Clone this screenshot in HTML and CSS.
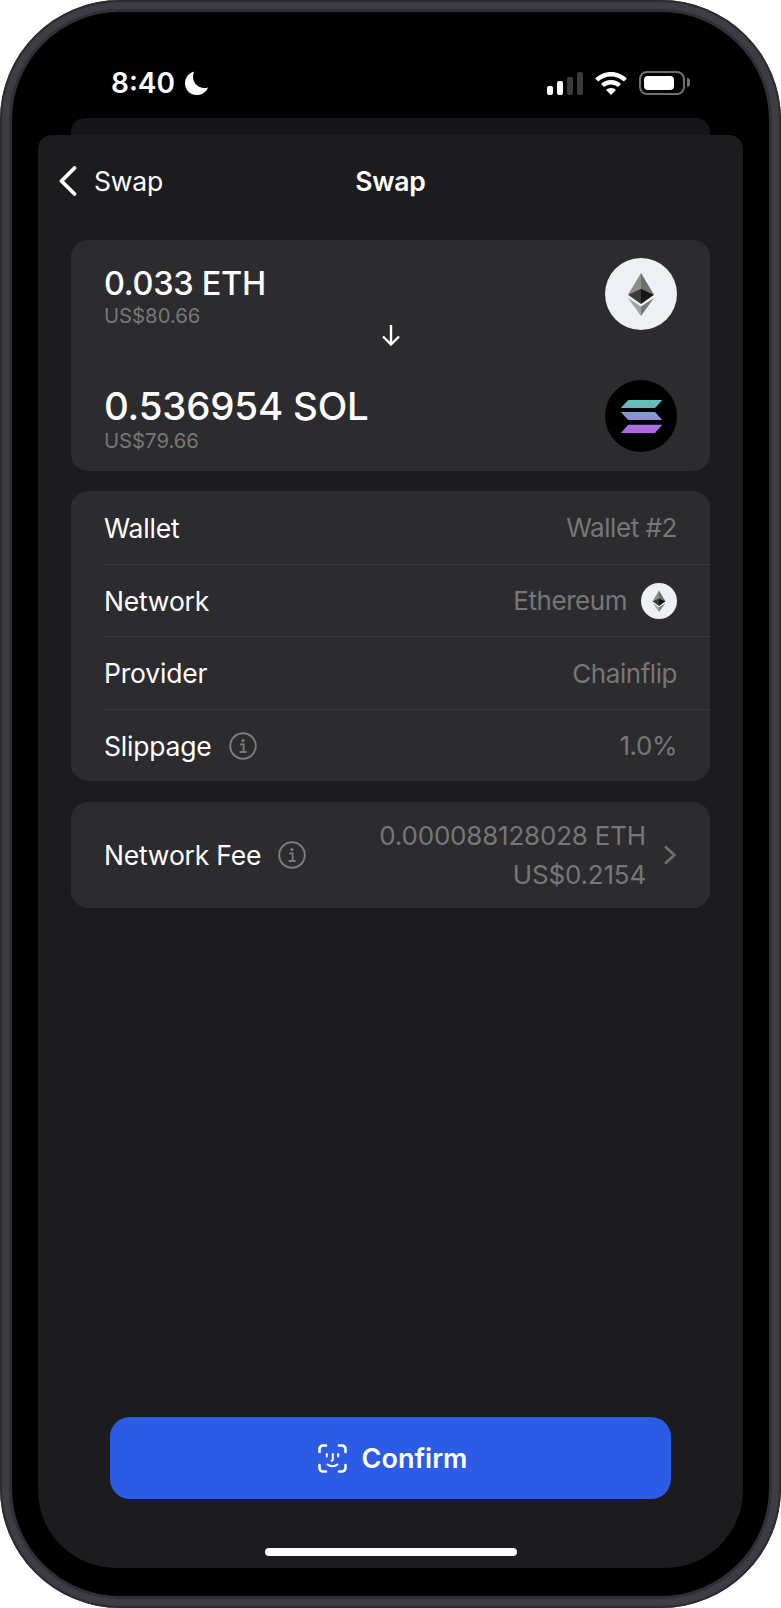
FILE: index.html
```html
<!DOCTYPE html>
<html lang="en">
<head>
  <meta charset="UTF-8">
  <title>Swap</title>
  <link rel="stylesheet" href="styles.css">
</head>
<body>
  <svg class="defs" width="0" height="0" aria-hidden="true">
    <defs>
      <symbol id="eth" viewBox="0 0 72 72">
        <circle cx="36" cy="36" r="36" fill="#edf0f4"/>
        <polygon points="36,15 23,36.7 36,30.5" fill="#8c8c8c"/>
        <polygon points="36,15 49,36.7 36,30.5" fill="#6e6e6e"/>
        <polygon points="23,36.7 36,30.5 36,46" fill="#3a3a3a"/>
        <polygon points="49,36.7 36,30.5 36,46" fill="#161616"/>
        <polygon points="23,40 36,48.5 36,58" fill="#a3a3a3"/>
        <polygon points="49,40 36,48.5 36,58" fill="#7a7a7a"/>
      </symbol>
      <symbol id="info" viewBox="0 0 28 28">
        <circle cx="14" cy="14" r="12.8" fill="none" stroke="#7b7b7e" stroke-width="2"/>
        <circle cx="14" cy="8.6" r="1.6" fill="#7b7b7e"/>
        <path d="M11 12.4h3.6v7.4M10.6 20h7" fill="none" stroke="#7b7b7e" stroke-width="1.8"/>
      </symbol>
      <linearGradient id="solGrad" gradientUnits="userSpaceOnUse" x1="0" y1="20" x2="0" y2="53">
        <stop offset="0" stop-color="#58c9b5"/>
        <stop offset="1" stop-color="#bb5fe8"/>
      </linearGradient>
    </defs>
  </svg>

  <div class="phone">
    <div class="screen">
      <div class="status">
        <div class="status-left">
          <span class="time">8:40</span>
          <svg class="moon" width="24" height="24" viewBox="0 0 24 24"><path d="M9.2 0.6C3.8 2 0 6.8 0 12.4 0 19 5.4 24 11.8 24c5 0 9.4-3 11.2-7.6-1.2 0.4-2.4 0.6-3.8 0.6C13 17 8 12 8 5.8 8 4 8.4 2.2 9.2 0.6z" fill="#fff"/></svg>
        </div>
        <div class="status-right">
          <div class="signal">
            <span class="bar bar-1"></span>
            <span class="bar bar-2"></span>
            <span class="bar bar-3 off"></span>
            <span class="bar bar-4 off"></span>
          </div>
          <svg class="wifi" width="32" height="23" viewBox="0 0 32 23">
            <path d="M16 0C9.8 0 4.3 2.5 0.2 6.4l3 3.1C6.5 6.4 11 4.4 16 4.4s9.5 2 12.8 5.1l3-3.1C27.7 2.5 22.2 0 16 0z" fill="#fff"/>
            <path d="M16 8c-3.9 0-7.4 1.5-10 3.9l3.1 3.1c1.8-1.6 4.2-2.6 6.9-2.6s5.1 1 6.9 2.6l3.1-3.1C23.4 9.5 19.9 8 16 8z" fill="#fff"/>
            <path d="M16 16c-1.9 0-3.6 0.7-4.9 1.9L16 23l4.9-5.1C19.6 16.7 17.9 16 16 16z" fill="#fff"/>
          </svg>
          <div class="battery"><span class="battery-fill"></span></div>
        </div>
      </div>

      <div class="sheet-behind"></div>
      <div class="sheet">
        <div class="nav">
          <div class="nav-back">
            <svg width="18" height="30" viewBox="0 0 18 30"><path d="M15.5 2L2.5 15l13 13" fill="none" stroke="#fff" stroke-width="3.8" stroke-linecap="round" stroke-linejoin="round"/></svg>
            <span>Swap</span>
          </div>
          <div class="nav-title">Swap</div>
        </div>

        <div class="card swap-card">
          <div class="swap-row">
            <div>
              <div class="amount">0.033 ETH</div>
              <div class="fiat">US$80.66</div>
            </div>
            <svg class="coin" width="72" height="72"><use href="#eth"/></svg>
          </div>
          <svg class="swap-arrow" width="20" height="22" viewBox="0 0 20 22"><path d="M10 1v19M2 12.5l8 8 8-8" fill="none" stroke="#fff" stroke-width="2.4"/></svg>
          <div class="swap-row swap-row-to">
            <div>
              <div class="amount amount-big">0.536954 SOL</div>
              <div class="fiat">US$79.66</div>
            </div>
            <svg class="coin" width="72" height="72" viewBox="0 0 72 72">
              <circle cx="36" cy="36" r="36" fill="#000"/>
              <polygon points="15.7,28 23.3,20 57.3,20 50,28" fill="url(#solGrad)"/>
              <polygon points="15.7,32 50,32 57.3,40 23.3,40" fill="url(#solGrad)"/>
              <polygon points="15.7,53 23.3,44.7 57.3,44.7 50,53" fill="url(#solGrad)"/>
            </svg>
          </div>
        </div>

        <div class="card info-card">
          <div class="row">
            <span class="label">Wallet</span>
            <span class="value">Wallet #2</span>
          </div>
          <div class="row">
            <span class="label">Network</span>
            <span class="value value-icon">Ethereum <svg width="36" height="36"><use href="#eth"/></svg></span>
          </div>
          <div class="row">
            <span class="label">Provider</span>
            <span class="value">Chainflip</span>
          </div>
          <div class="row">
            <span class="label label-icon">Slippage <svg width="28" height="28"><use href="#info"/></svg></span>
            <span class="value">1.0%</span>
          </div>
        </div>

        <div class="card fee-card">
          <span class="label label-icon">Network Fee <svg width="28" height="28"><use href="#info"/></svg></span>
          <div class="fee-right">
            <div class="fee-lines">
              <div>0.000088128028 ETH</div>
              <div>US$0.2154</div>
            </div>
            <svg width="14" height="20" viewBox="0 0 14 20"><path d="M2 1.5L11.5 10 2 18.5" fill="none" stroke="#6f6f72" stroke-width="2.6"/></svg>
          </div>
        </div>

        <div class="spacer"></div>

        <button class="confirm">
          <svg width="29" height="29" viewBox="0 0 29 29" fill="none" stroke="#fff" stroke-width="2.6" stroke-linecap="round">
            <path d="M1.5 8V5a3.5 3.5 0 0 1 3.5-3.5h3M21 1.5h3A3.5 3.5 0 0 1 27.5 5v3M27.5 21v3a3.5 3.5 0 0 1-3.5 3.5h-3M8 27.5H5A3.5 3.5 0 0 1 1.5 24v-3"/>
            <path d="M8.8 10v2.6M20.2 10v2.6M14.8 10v5.5a1.3 1.3 0 0 1-1.3 1.3M9.5 20.5c2.8 2.3 7.2 2.3 10 0" stroke-width="2"/>
          </svg>
          <span>Confirm</span>
        </button>
        <div class="home-bar"></div>
      </div>
    </div>
  </div>
</body>
</html>
```

FILE: styles.css
```css
* {
  box-sizing: border-box;
}
body {
  margin: 0;
  background: #fff;
  font-family: 'Inter', 'Liberation Sans', sans-serif;
  color: #fff;
}
.defs {
  position: absolute;
}
.phone {
  width: 781px;
  height: 1608px;
  padding: 12px;
  border-radius: 120px;
  background: #3d3d45;
  box-shadow: inset 0 0 0 2px #2b2b30;
}
.screen {
  height: 100%;
  padding: 0 26px 28px;
  border-radius: 108px;
  background: #000;
  box-shadow: 0 0 0 3px #2f2f35;
  display: flex;
  flex-direction: column;
}

/* status bar */
.status {
  height: 106px;
  flex: none;
  padding: 59px 58px 0 73px;
  display: flex;
  justify-content: space-between;
  align-items: flex-start;
}
.status-left {
  display: flex;
  align-items: center;
  gap: 10px;
}
.time {
  font-size: 28px;
  font-weight: 600;
  line-height: 24px;
}
.status-right {
  display: flex;
  align-items: flex-end;
  gap: 12px;
}
.signal {
  display: flex;
  align-items: flex-end;
  gap: 3.5px;
  height: 23px;
}
.bar {
  width: 6.5px;
  border-radius: 2px;
  background: #fff;
}
.bar.off {
  background: #3b3b3d;
}
.bar-1 { height: 9px; }
.bar-2 { height: 14px; }
.bar-3 { height: 18px; }
.bar-4 { height: 23px; }
.battery {
  position: relative;
  width: 46px;
  height: 24px;
  padding: 3px;
  border: 2px solid #707073;
  border-radius: 8px;
}
.battery::after {
  content: "";
  position: absolute;
  right: -7px;
  top: 5px;
  width: 3px;
  height: 9px;
  border-radius: 0 3px 3px 0;
  background: #707073;
}
.battery-fill {
  display: block;
  width: 30px;
  height: 100%;
  border-radius: 4px;
  background: #fff;
}

/* sheet */
.sheet-behind {
  height: 17px;
  flex: none;
  margin: 0 33px;
  border-radius: 14px 14px 0 0;
  background: #161618;
}
.sheet {
  flex: 1;
  padding: 0 33px;
  border-radius: 14px 14px 78px 78px;
  background: #1c1c1e;
  display: flex;
  flex-direction: column;
}
.nav {
  position: relative;
  height: 105px;
  flex: none;
  display: flex;
  align-items: center;
  justify-content: center;
  padding-bottom: 13px;
  font-size: 26.5px;
  letter-spacing: -0.2px;
}
.nav-back {
  position: absolute;
  left: -12px;
  top: 31px;
  display: flex;
  align-items: center;
  gap: 17px;
  line-height: 30px;
}
.nav-title {
  font-weight: 600;
}

.card {
  flex: none;
  border-radius: 17px;
  background: #2c2c2e;
}
.swap-card {
  position: relative;
  height: 231px;
  padding: 18px 33px 18px;
}
.swap-row {
  display: flex;
  justify-content: space-between;
  align-items: flex-start;
}
.swap-row-to {
  margin-top: 50px;
}
.amount {
  margin-top: 5px;
  font-size: 32.5px;
  font-weight: 500;
  letter-spacing: -0.3px;
  line-height: 41px;
}
.amount-big {
  margin-top: 4px;
  font-size: 38.5px;
  letter-spacing: -0.2px;
  line-height: 45px;
}
.fiat {
  font-size: 20.3px;
  line-height: 24px;
  color: #77777a;
}
.swap-arrow {
  position: absolute;
  left: 310px;
  top: 84px;
}

.info-card {
  margin-top: 20px;
  height: 290px;
  padding-left: 32px;
}
.row {
  height: 72.5px;
  padding: 1px 33px 0 1px;
  display: flex;
  justify-content: space-between;
  align-items: center;
  border-top: 1px solid #3a3a3c;
}
.row:first-child {
  border-top: none;
}
.label {
  font-size: 26.5px;
  letter-spacing: -0.2px;
}
.value {
  font-size: 26px;
  letter-spacing: -0.45px;
  color: #77777a;
}
.label-icon,
.value-icon {
  display: flex;
  align-items: center;
}
.label-icon {
  gap: 17px;
}
.value-icon {
  gap: 14px;
}
.fee-card {
  margin-top: 21px;
  height: 106px;
  padding: 0 33px;
  display: flex;
  justify-content: space-between;
  align-items: center;
}
.fee-right {
  display: flex;
  align-items: center;
  gap: 17px;
}
.fee-lines {
  text-align: right;
  font-size: 26px;
  letter-spacing: -0.2px;
  line-height: 39px;
  color: #77777a;
}
.spacer {
  flex: 1;
}
.confirm {
  height: 82px;
  flex: none;
  margin: 0 39px;
  padding: 0 0 0 4px;
  border: none;
  border-radius: 20px;
  background: #2c5ce6;
  color: #fff;
  font-family: inherit;
  font-size: 27px;
  font-weight: 600;
  display: flex;
  align-items: center;
  justify-content: center;
  gap: 15px;
}
.home-bar {
  width: 252px;
  height: 8px;
  flex: none;
  margin: 49px auto 12px;
  border-radius: 4px;
  background: #fff;
}
```
